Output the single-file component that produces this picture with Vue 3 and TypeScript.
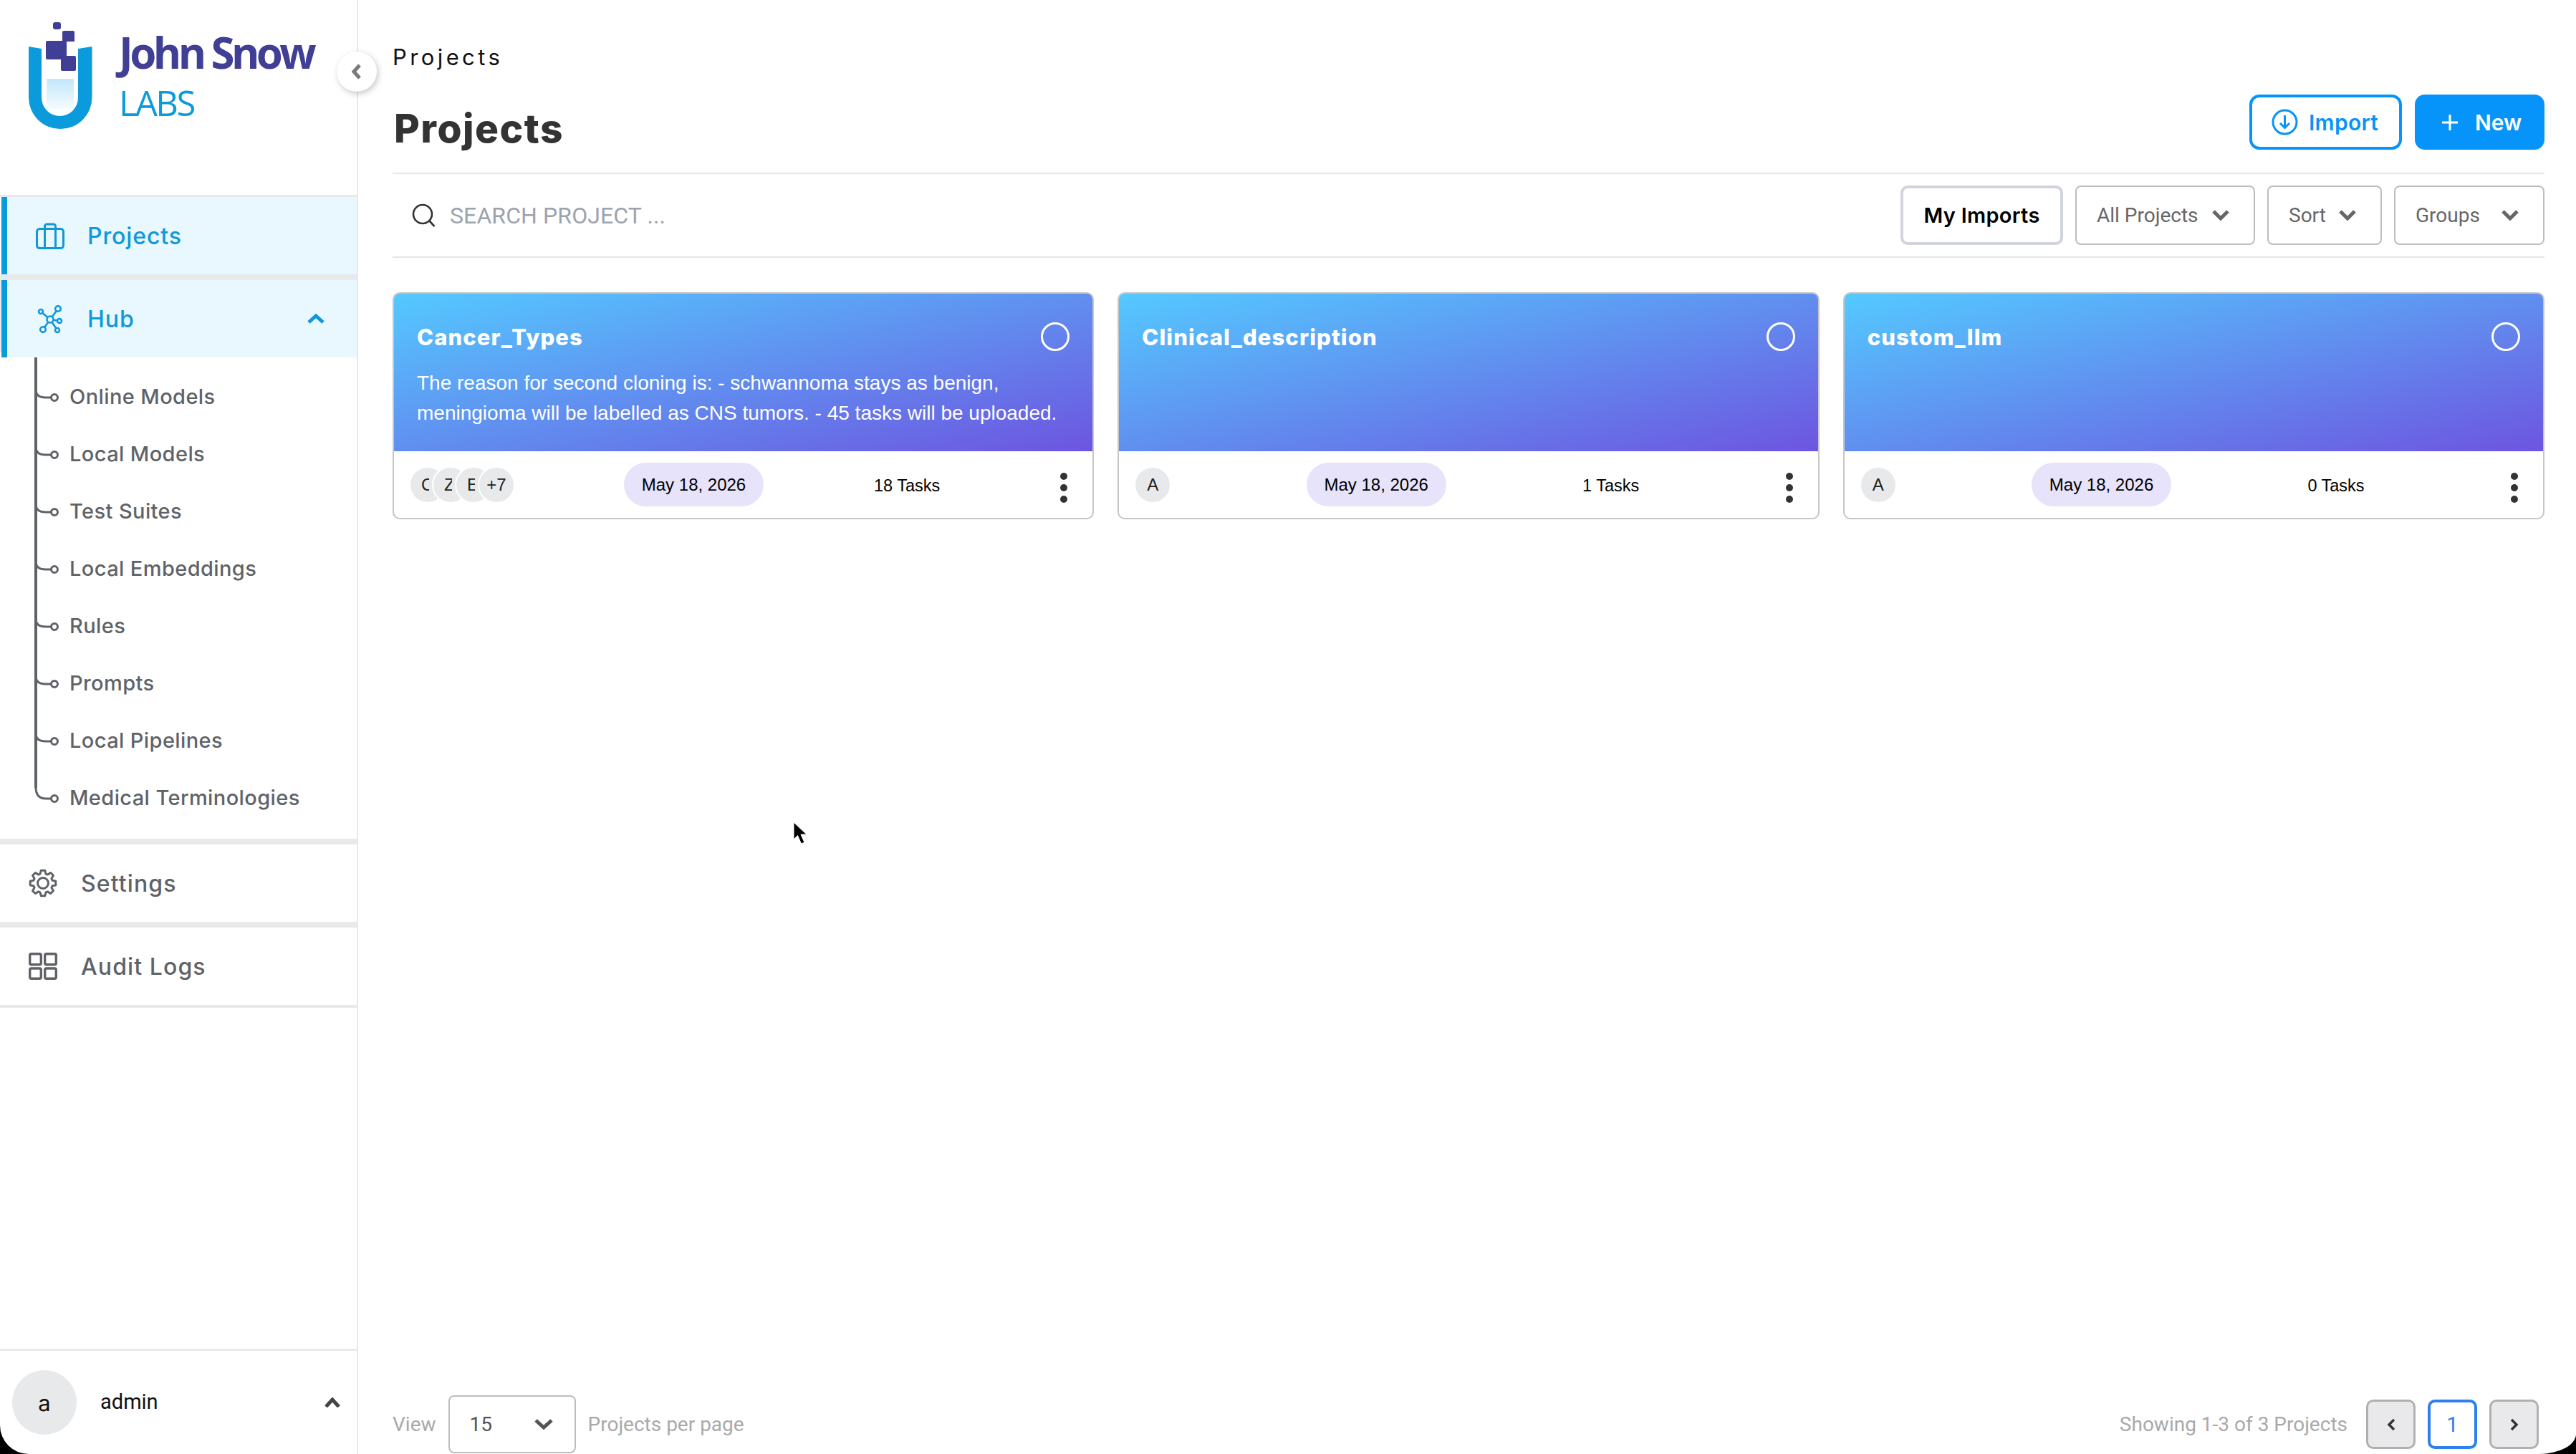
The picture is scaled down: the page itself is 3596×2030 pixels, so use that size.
<script setup lang="ts">
interface Card {
  title: string;
  desc: string[];
  avatars: string[];
  date: string;
  tasks: string;
}

const subItems: string[] = [
  "Online Models",
  "Local Models",
  "Test Suites",
  "Local Embeddings",
  "Rules",
  "Prompts",
  "Local Pipelines",
  "Medical Terminologies",
];

const cards: Card[] = [
  {
    title: "Cancer_Types",
    desc: [
      "The reason for second cloning is: - schwannoma stays as benign,",
      "meningioma will be labelled as CNS tumors. - 45 tasks will be uploaded.",
    ],
    avatars: ["C", "Z", "E", "+7"],
    date: "May 18, 2026",
    tasks: "18 Tasks",
  },
  { title: "Clinical_description", desc: [], avatars: ["A"], date: "May 18, 2026", tasks: "1 Tasks" },
  { title: "custom_llm", desc: [], avatars: ["A"], date: "May 18, 2026", tasks: "0 Tasks" },
];

const filters = [
  { label: "All Projects", cls: "f-all" },
  { label: "Sort", cls: "f-sort" },
  { label: "Groups", cls: "f-groups" },
];

// 8 tooth gear outline, centred on 20,20
function gearPath(): string {
  const pts: string[] = [];
  for (let i = 0; i < 8; i++) {
    const a = (i * Math.PI) / 4;
    const steps: [number, number][] = [
      [-0.3, 13.5],
      [-0.15, 18],
      [0.15, 18],
      [0.3, 13.5],
    ];
    for (const [da, r] of steps) {
      const x = 20 + r * Math.cos(a + da);
      const y = 20 + r * Math.sin(a + da);
      pts.push(`${x.toFixed(1)} ${y.toFixed(1)}`);
    }
  }
  return "M" + pts.join(" L") + " Z";
}
const gear = gearPath();
</script>

<template>
  <div class="app">
    <aside class="sidebar">
      <div class="logo">
        <svg class="logo-mark" width="90" height="150" viewBox="40 31 90 150">
          <defs>
            <linearGradient id="tube" x1="0" y1="0" x2="0" y2="1">
              <stop offset="0" stop-color="#c4e7fb" />
              <stop offset="1" stop-color="#f4fbff" />
            </linearGradient>
          </defs>
          <rect x="65" y="110" width="38" height="42" fill="url(#tube)" />
          <path
            d="M40 65 L58 68 V136 A25.5 26 0 0 0 109 136 V68 L128.5 65 V136 A44.2 44 0 0 1 40 136 Z"
            fill="#0b9bdc"
          />
          <rect x="74" y="31" width="11" height="10" rx="3" fill="#403f95" />
          <path
            d="M89 43 H102 a2 2 0 0 1 2 2 V58 H93 V78 H104 a2 2 0 0 1 2 2 V97 a2 2 0 0 1 -2 2 H87 a2 2 0 0 1 -2 -2 V83 H66 a2 2 0 0 1 -2 -2 V59 a2 2 0 0 1 2 -2 H87 V45 a2 2 0 0 1 2 -2 Z"
            fill="#403f95"
          />
        </svg>
        <div class="logo-text">
          <div class="logo-john">John Snow</div>
          <div class="logo-labs">LABS</div>
        </div>
      </div>

      <button class="collapse">
        <svg width="14" height="22" viewBox="0 0 14 22">
          <path d="M11 2 L3 11 L11 20" fill="none" stroke="#7a7a7a" stroke-width="5" />
        </svg>
      </button>

      <nav class="nav">
        <a class="nav-row active">
          <svg class="ico-brief" width="40" height="37" viewBox="0 0 40 37" fill="none" stroke="#0f98da" stroke-width="3">
            <rect x="1.5" y="8.5" width="37" height="27" rx="4" />
            <path d="M12.5 35 V5 a3 3 0 0 1 3 -3 h9 a3 3 0 0 1 3 3 V35" />
          </svg>
          <span class="nav-label">Projects</span>
        </a>
        <a class="nav-row active">
          <svg class="ico-hub" width="40" height="40" viewBox="50 424 40 40" fill="none" stroke="#0f98da" stroke-width="2.6">
            <path d="M70 445 L57 434 M70 445 L81 430 M70 445 L83 447 M70 445 L60 459 M70 445 L80 460" />
            <circle cx="70" cy="445" r="4.5" fill="#e9f7fe" />
            <circle cx="57" cy="434" r="3" fill="#e9f7fe" />
            <circle cx="81" cy="430" r="3.8" fill="#e9f7fe" />
            <circle cx="83" cy="447" r="3" fill="#e9f7fe" />
            <circle cx="60" cy="459" r="3.8" fill="#e9f7fe" />
            <circle cx="80" cy="460" r="3" fill="#e9f7fe" />
          </svg>
          <span class="nav-label">Hub</span>
          <svg class="nav-chev" width="24" height="14" viewBox="0 0 24 14">
            <path d="M2 12 L12 3 L22 12" fill="none" stroke="#0f98da" stroke-width="5" />
          </svg>
        </a>

        <ul class="sub-list">
          <li v-for="(item, i) in subItems" :key="item" class="sub-item">
            <svg class="branch" width="97" height="80" viewBox="0 0 97 80" fill="none" stroke="#5f6368" stroke-width="3">
              <path v-if="i < subItems.length - 1" d="M50 31 C50 39 56 42 64 42 H71" />
              <path v-else d="M50 26 C50 37 55 42 64 42 H71" />
              <circle cx="76" cy="42" r="4.5" />
            </svg>
            <span>{{ item }}</span>
          </li>
        </ul>

        <a class="nav-row plain">
          <svg class="ico-plain" width="40" height="40" viewBox="0 0 40 40" fill="none" stroke="#5f6368" stroke-width="3" stroke-linejoin="round">
            <path :d="gear" />
            <circle cx="20" cy="20" r="7.5" />
          </svg>
          <span class="nav-label">Settings</span>
        </a>
        <a class="nav-row plain last">
          <svg class="ico-plain" width="40" height="38" viewBox="0 0 40 38" fill="none" stroke="#5f6368" stroke-width="3.4">
            <rect x="1.7" y="1.7" width="15.6" height="15" rx="2" />
            <rect x="22.7" y="1.7" width="15.6" height="15" rx="2" />
            <rect x="1.7" y="22" width="15.6" height="14.3" rx="2" />
            <rect x="22.7" y="22" width="15.6" height="14.3" rx="2" />
          </svg>
          <span class="nav-label">Audit Logs</span>
        </a>
      </nav>

      <div class="user">
        <div class="user-avatar">a</div>
        <span class="user-name">admin</span>
        <svg class="user-chev" width="24" height="14" viewBox="0 0 24 14">
          <path d="M3 13 L12 3 L21 13" fill="none" stroke="#444" stroke-width="5" />
        </svg>
      </div>
    </aside>

    <main class="main">
      <div class="crumb">Projects</div>

      <header class="head">
        <h1>Projects</h1>
        <div class="head-actions">
          <button class="btn btn-outline">
            <svg width="37" height="37" viewBox="0 0 37 37" fill="none" stroke="#0794fa" stroke-width="3">
              <circle cx="18.5" cy="18.5" r="16.5" />
              <path d="M18.5 9 V26 M12 20 L18.5 26.5 L25 20" />
            </svg>
            Import
          </button>
          <button class="btn btn-solid">
            <svg width="22" height="22" viewBox="0 0 22 22" stroke="#fff" stroke-width="3">
              <path d="M11 0 V22 M0 11 H22" />
            </svg>
            New
          </button>
        </div>
      </header>

      <div class="toolbar">
        <div class="search">
          <svg width="33" height="33" viewBox="0 0 33 33" fill="none" stroke="#333" stroke-width="2.6">
            <circle cx="15" cy="15" r="13" />
            <path d="M24.5 24.5 L31.5 32" />
          </svg>
          <span class="search-text">SEARCH PROJECT ...</span>
        </div>
        <button class="my-imports">My Imports</button>
        <button v-for="f in filters" :key="f.label" class="filter" :class="f.cls">
          <span>{{ f.label }}</span>
          <svg width="24" height="15" viewBox="0 0 24 15">
            <path d="M2 2 L12 12 L22 2" fill="none" stroke="#666" stroke-width="5" />
          </svg>
        </button>
      </div>

      <section class="cards">
        <article v-for="c in cards" :key="c.title" class="card">
          <div class="card-top">
            <div class="card-title-row">
              <h3>{{ c.title }}</h3>
              <span class="radio"></span>
            </div>
            <p v-for="line in c.desc" :key="line">{{ line }}</p>
          </div>
          <div class="card-foot">
            <div class="avatars">
              <span v-for="a in c.avatars" :key="a" class="avatar"><b>{{ a }}</b></span>
            </div>
            <span class="date">{{ c.date }}</span>
            <span class="tasks">{{ c.tasks }}</span>
            <span class="dots"><i></i><i></i><i></i></span>
          </div>
        </article>
      </section>

      <footer class="foot">
        <span class="muted">View</span>
        <div class="per-page">
          <span>15</span>
          <svg width="26" height="15" viewBox="0 0 26 15">
            <path d="M2 2 L13 12 L24 2" fill="none" stroke="#555" stroke-width="5" />
          </svg>
        </div>
        <span class="muted">Projects per page</span>
        <span class="muted showing">Showing 1-3 of 3 Projects</span>
        <div class="pager">
          <button class="page-btn">
            <svg width="12" height="18" viewBox="0 0 12 18"><path d="M10 2 L3 9 L10 16" fill="none" stroke="#333" stroke-width="3.4" /></svg>
          </button>
          <button class="page-btn current">1</button>
          <button class="page-btn">
            <svg width="12" height="18" viewBox="0 0 12 18"><path d="M2 2 L9 9 L2 16" fill="none" stroke="#333" stroke-width="3.4" /></svg>
          </button>
        </div>
      </footer>
    </main>

    <svg class="cursor" width="26" height="34" viewBox="0 0 26 34">
      <path d="M1 1 V25 L6.5 19.5 L11.5 31 L16 29 L11 18 L19 18 Z" fill="#000" stroke="#fff" stroke-width="1" />
    </svg>
  </div>
</template>

<style>
html,
body {
  margin: 0;
  background: #000;
}
</style>

<style scoped>
.app {
  position: relative;
  display: flex;
  width: 3596px;
  height: 2030px;
  overflow: hidden;
  background: #fff;
  border-bottom-left-radius: 40px;
  border-bottom-right-radius: 52px 28px;
  font-family: "Roboto", sans-serif;
}

.sidebar {
  position: relative;
  flex: none;
  display: flex;
  flex-direction: column;
  width: 500px;
  box-sizing: border-box;
  border-right: 2px solid #e8e9eb;
}

.logo {
  display: flex;
  gap: 36px;
  height: 272px;
  box-sizing: border-box;
  padding: 31px 0 0 40px;
}

.logo-mark {
  flex: none;
}

.logo-text {
  font-family: "Open Sans", sans-serif;
}

.logo-john {
  margin-top: 6px;
  font-size: 60px;
  line-height: 72px;
  font-weight: 700;
  letter-spacing: -4.6px;
  color: #403f95;
}

.logo-labs {
  margin: 4px 0 0 0;
  font-size: 49px;
  line-height: 60px;
  font-weight: 400;
  letter-spacing: -2.6px;
  color: #0b9bdc;
}

.collapse {
  position: absolute;
  top: 72px;
  left: 470px;
  display: flex;
  align-items: center;
  justify-content: center;
  width: 56px;
  height: 56px;
  padding: 0;
  border: none;
  border-radius: 50%;
  background: #fff;
  box-shadow: 2px 3px 8px rgba(0, 0, 0, 0.22);
}

.nav {
  display: flex;
  flex-direction: column;
  border-top: 3px solid #e8e9eb;
}

.nav-row {
  display: flex;
  align-items: center;
  height: 108px;
  font-family: "Inter", sans-serif;
  font-size: 32px;
  font-weight: 500;
}

.nav-row.active {
  box-sizing: border-box;
  border-left: 8px solid #0b9bdc;
  margin-left: 2px;
  background: #e9f7fe;
  color: #0f98da;
}

.nav-row.active + .nav-row.active {
  margin-top: 8px;
  box-shadow: -2px -8px 0 0 #e8e9eb, 0 -8px 0 0 #e8e9eb;
}

.ico-brief {
  margin-left: 40px;
}

.ico-hub {
  margin-left: 40px;
}

.nav-row.active .nav-label {
  margin-left: 32px;
  letter-spacing: 0.9px;
}

.nav-chev {
  margin-left: auto;
  margin-right: 45px;
}

.sub-list {
  list-style: none;
  position: relative;
  box-sizing: border-box;
  height: 680px;
  margin: 0;
  padding: 14px 0 0;
  border-bottom: 8px solid #e8e9eb;
}

.sub-list::before {
  content: "";
  position: absolute;
  top: 0;
  left: 48px;
  width: 4px;
  height: 601px;
  background: #5f6368;
}

.sub-item {
  display: flex;
  align-items: center;
  height: 80px;
  font-family: "Inter", sans-serif;
  font-size: 29px;
  font-weight: 500;
  letter-spacing: 0.4px;
  color: #5f6368;
}

.branch {
  flex: none;
}

.nav-row.plain {
  box-sizing: border-box;
  color: #5f6368;
  border-bottom: 8px solid #e8e9eb;
  height: 116px;
  padding-left: 40px;
}

.nav-row.plain.last {
  border-bottom-width: 4px;
  height: 112px;
}

.nav-row.plain .nav-label {
  margin-left: 33px;
  letter-spacing: 1.1px;
}

.user {
  display: flex;
  align-items: center;
  margin-top: auto;
  height: 147px;
  box-sizing: border-box;
  padding: 0 22px 0 17px;
  border-top: 3px solid #e8e9eb;
}

.user-avatar {
  display: flex;
  align-items: center;
  justify-content: center;
  width: 90px;
  height: 90px;
  border-radius: 50%;
  background: #e8e9eb;
  font-family: "Inter", sans-serif;
  font-size: 31px;
  color: #111;
}

.user-name {
  margin-left: 33px;
  margin-top: -2px;
  font-size: 29px;
  color: #111;
}

.user-chev {
  margin-left: auto;
}

.main {
  flex: 1;
  display: flex;
  flex-direction: column;
  min-width: 0;
  padding: 0 44px 1px 48px;
}

.crumb {
  margin-top: 61px;
  height: 38px;
  line-height: 38px;
  font-size: 31px;
  letter-spacing: 4.4px;
  font-family: "Inter", sans-serif;
  color: #111;
  margin-bottom: 1px;
}

.head {
  display: flex;
  justify-content: space-between;
  align-items: flex-start;
  height: 143px;
  padding-top: 32px;
  box-sizing: border-box;
  border-bottom: 2px solid #e6e7e8;
}

.head h1 {
  margin: 14px 0 0 2px;
  font-family: "Inter", sans-serif;
  font-size: 55px;
  line-height: 66px;
  font-weight: 800;
  letter-spacing: 1.5px;
  color: #333;
}

.head-actions {
  display: flex;
  gap: 18px;
}

.btn {
  display: flex;
  align-items: center;
  height: 77px;
  box-sizing: border-box;
  border-radius: 14px;
  font-family: "Inter", sans-serif;
  font-size: 30px;
  font-weight: 600;
}

.btn-outline {
  gap: 15px;
  width: 213px;
  padding: 0 0 0 27px;
  border: 4px solid #0794fa;
  background: #fff;
  color: #0794fa;
  letter-spacing: 0.3px;
}

.btn-solid {
  gap: 24px;
  width: 181px;
  padding: 0 0 0 38px;
  border: none;
  background: #0794fa;
  color: #fff;
}

.toolbar {
  display: flex;
  align-items: center;
  height: 117px;
  box-sizing: border-box;
  border-bottom: 2px solid #e6e7e8;
}

.search {
  flex: 1;
  display: flex;
  align-items: center;
  gap: 20px;
  padding-left: 27px;
}

.search-text {
  font-size: 32px;
  letter-spacing: 0.1px;
  color: #9ca3af;
}

.my-imports {
  width: 227px;
  height: 83px;
  box-sizing: border-box;
  padding: 0;
  border: 4px solid #d1d5db;
  border-radius: 10px;
  background: #fff;
  font-family: "Inter", sans-serif;
  font-size: 29px;
  font-weight: 600;
  letter-spacing: 0.3px;
  color: #000;
}

.filter {
  display: flex;
  align-items: center;
  justify-content: space-between;
  height: 83px;
  box-sizing: border-box;
  margin-left: 17px;
  padding: 0 34px 0 28px;
  border: 2px solid #bdbdbd;
  border-radius: 8px;
  background: #fff;
  font-family: "Roboto", sans-serif;
  font-size: 28px;
  color: #666;
}

.f-all {
  width: 251px;
}

.f-sort {
  width: 160px;
}

.f-groups {
  width: 210px;
}

.cards {
  display: grid;
  grid-template-columns: repeat(3, 1fr);
  gap: 33px;
  margin-top: 48px;
}

.card {
  height: 317px;
  box-sizing: border-box;
  display: flex;
  flex-direction: column;
  border: 2px solid #c6c6c6;
  border-radius: 10px;
  overflow: hidden;
}

.card-top {
  height: 220px;
  flex: none;
  box-sizing: border-box;
  padding: 35px 32px 0;
  background: linear-gradient(to bottom right, #54c9ff, #6d55e0);
  color: #fff;
}

.card-title-row {
  display: flex;
  align-items: center;
  justify-content: space-between;
  height: 40px;
  margin-top: 5px;
}

.card-top h3 {
  margin: 0;
  font-family: "Inter", sans-serif;
  font-size: 31px;
  font-weight: 800;
  letter-spacing: 1.1px;
}

.radio {
  width: 40px;
  height: 40px;
  box-sizing: border-box;
  border: 3px solid #fff;
  border-radius: 50%;
}

.card-top p {
  margin: 0;
  font-family: "Liberation Sans", sans-serif;
  font-size: 28px;
  line-height: 42px;
  white-space: nowrap;
}

.card-title-row + p {
  margin-top: 24px;
}

.card-foot {
  flex: 1;
  display: flex;
  align-items: center;
  justify-content: space-between;
  padding: 0 21px 0 23px;
  font-family: "Liberation Sans", sans-serif;
  font-size: 24px;
  color: #000;
}

.avatars {
  display: flex;
}

.avatar {
  position: relative;
  display: flex;
  align-items: center;
  justify-content: center;
  flex: none;
  width: 48px;
  height: 48px;
  border-radius: 50%;
  background: #e8e9eb;
  box-shadow: 0 0 0 2px #fff;
  font-size: 24px;
  color: #222;
}

.avatar b {
  font-weight: 400;
}

.avatar + .avatar {
  margin-left: -16px;
}

/* overlapped initials only show their left edge */
.avatar:not(:last-child) {
  justify-content: flex-start;
  padding-left: 15px;
  box-sizing: border-box;
}

.avatar:not(:last-child) b {
  width: 11px;
  overflow: hidden;
}

.date {
  display: flex;
  align-items: center;
  justify-content: center;
  width: 195px;
  height: 61px;
  border-radius: 31px;
  background: #e6e3fb;
}

.tasks {
  padding-top: 3px;
  font-size: 23.5px;
}

.dots {
  display: flex;
  flex-direction: column;
  align-items: center;
  gap: 6px;
  width: 38px;
  padding-top: 8px;
}

.dots i {
  display: block;
  width: 10px;
  height: 10px;
  border-radius: 50%;
  background: #333;
}

.foot {
  display: flex;
  align-items: center;
  margin-top: auto;
  height: 81px;
  font-size: 28px;
}

.muted {
  color: #a9a9a9;
}

.per-page {
  display: flex;
  align-items: center;
  justify-content: space-between;
  width: 178px;
  height: 81px;
  box-sizing: border-box;
  margin: 0 17px;
  padding: 0 30px 0 28px;
  border: 2px solid #bdbdbd;
  border-radius: 8px;
  color: #555;
}

.showing {
  margin-left: auto;
}

.pager {
  display: flex;
  gap: 17px;
  margin: 0 8px 0 26px;
}

.page-btn {
  display: flex;
  align-items: center;
  justify-content: center;
  width: 69px;
  height: 69px;
  box-sizing: border-box;
  padding: 0;
  border: 3px solid #b0b0b0;
  border-radius: 10px;
  background: #e9e9eb;
}

.page-btn.current {
  border: 4px solid #2f80ed;
  background: #fff;
  font-family: "Roboto", sans-serif;
  font-size: 30px;
  color: #2f80ed;
}

.cursor {
  position: absolute;
  top: 1147px;
  left: 1107px;
}
</style>
